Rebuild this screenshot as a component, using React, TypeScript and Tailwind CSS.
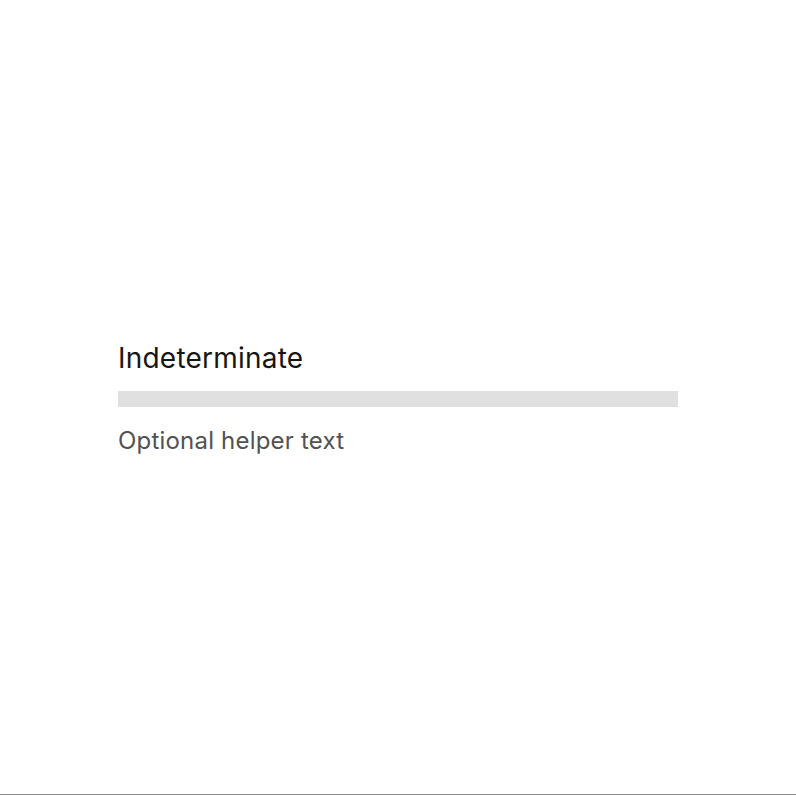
export default function App() {
  return (
    <div className="h-[795px] w-full bg-white border-b border-[#8d8d8d] flex flex-col items-center" style={{ fontFamily: "Inter, 'Noto Sans', sans-serif" }}>
      <div className="w-[560px] pt-[340px]">
        <div className="text-[28px] leading-[36px] text-[#161616] tracking-[0.22px]">Indeterminate</div>
        <div className="mt-[15px] h-[16px] w-full bg-[#e0e0e0]" />
        <div className="mt-[18px] text-[24px] leading-[32px] text-[#525252] tracking-[0.2px]">Optional helper text</div>
      </div>
    </div>
  );
}
